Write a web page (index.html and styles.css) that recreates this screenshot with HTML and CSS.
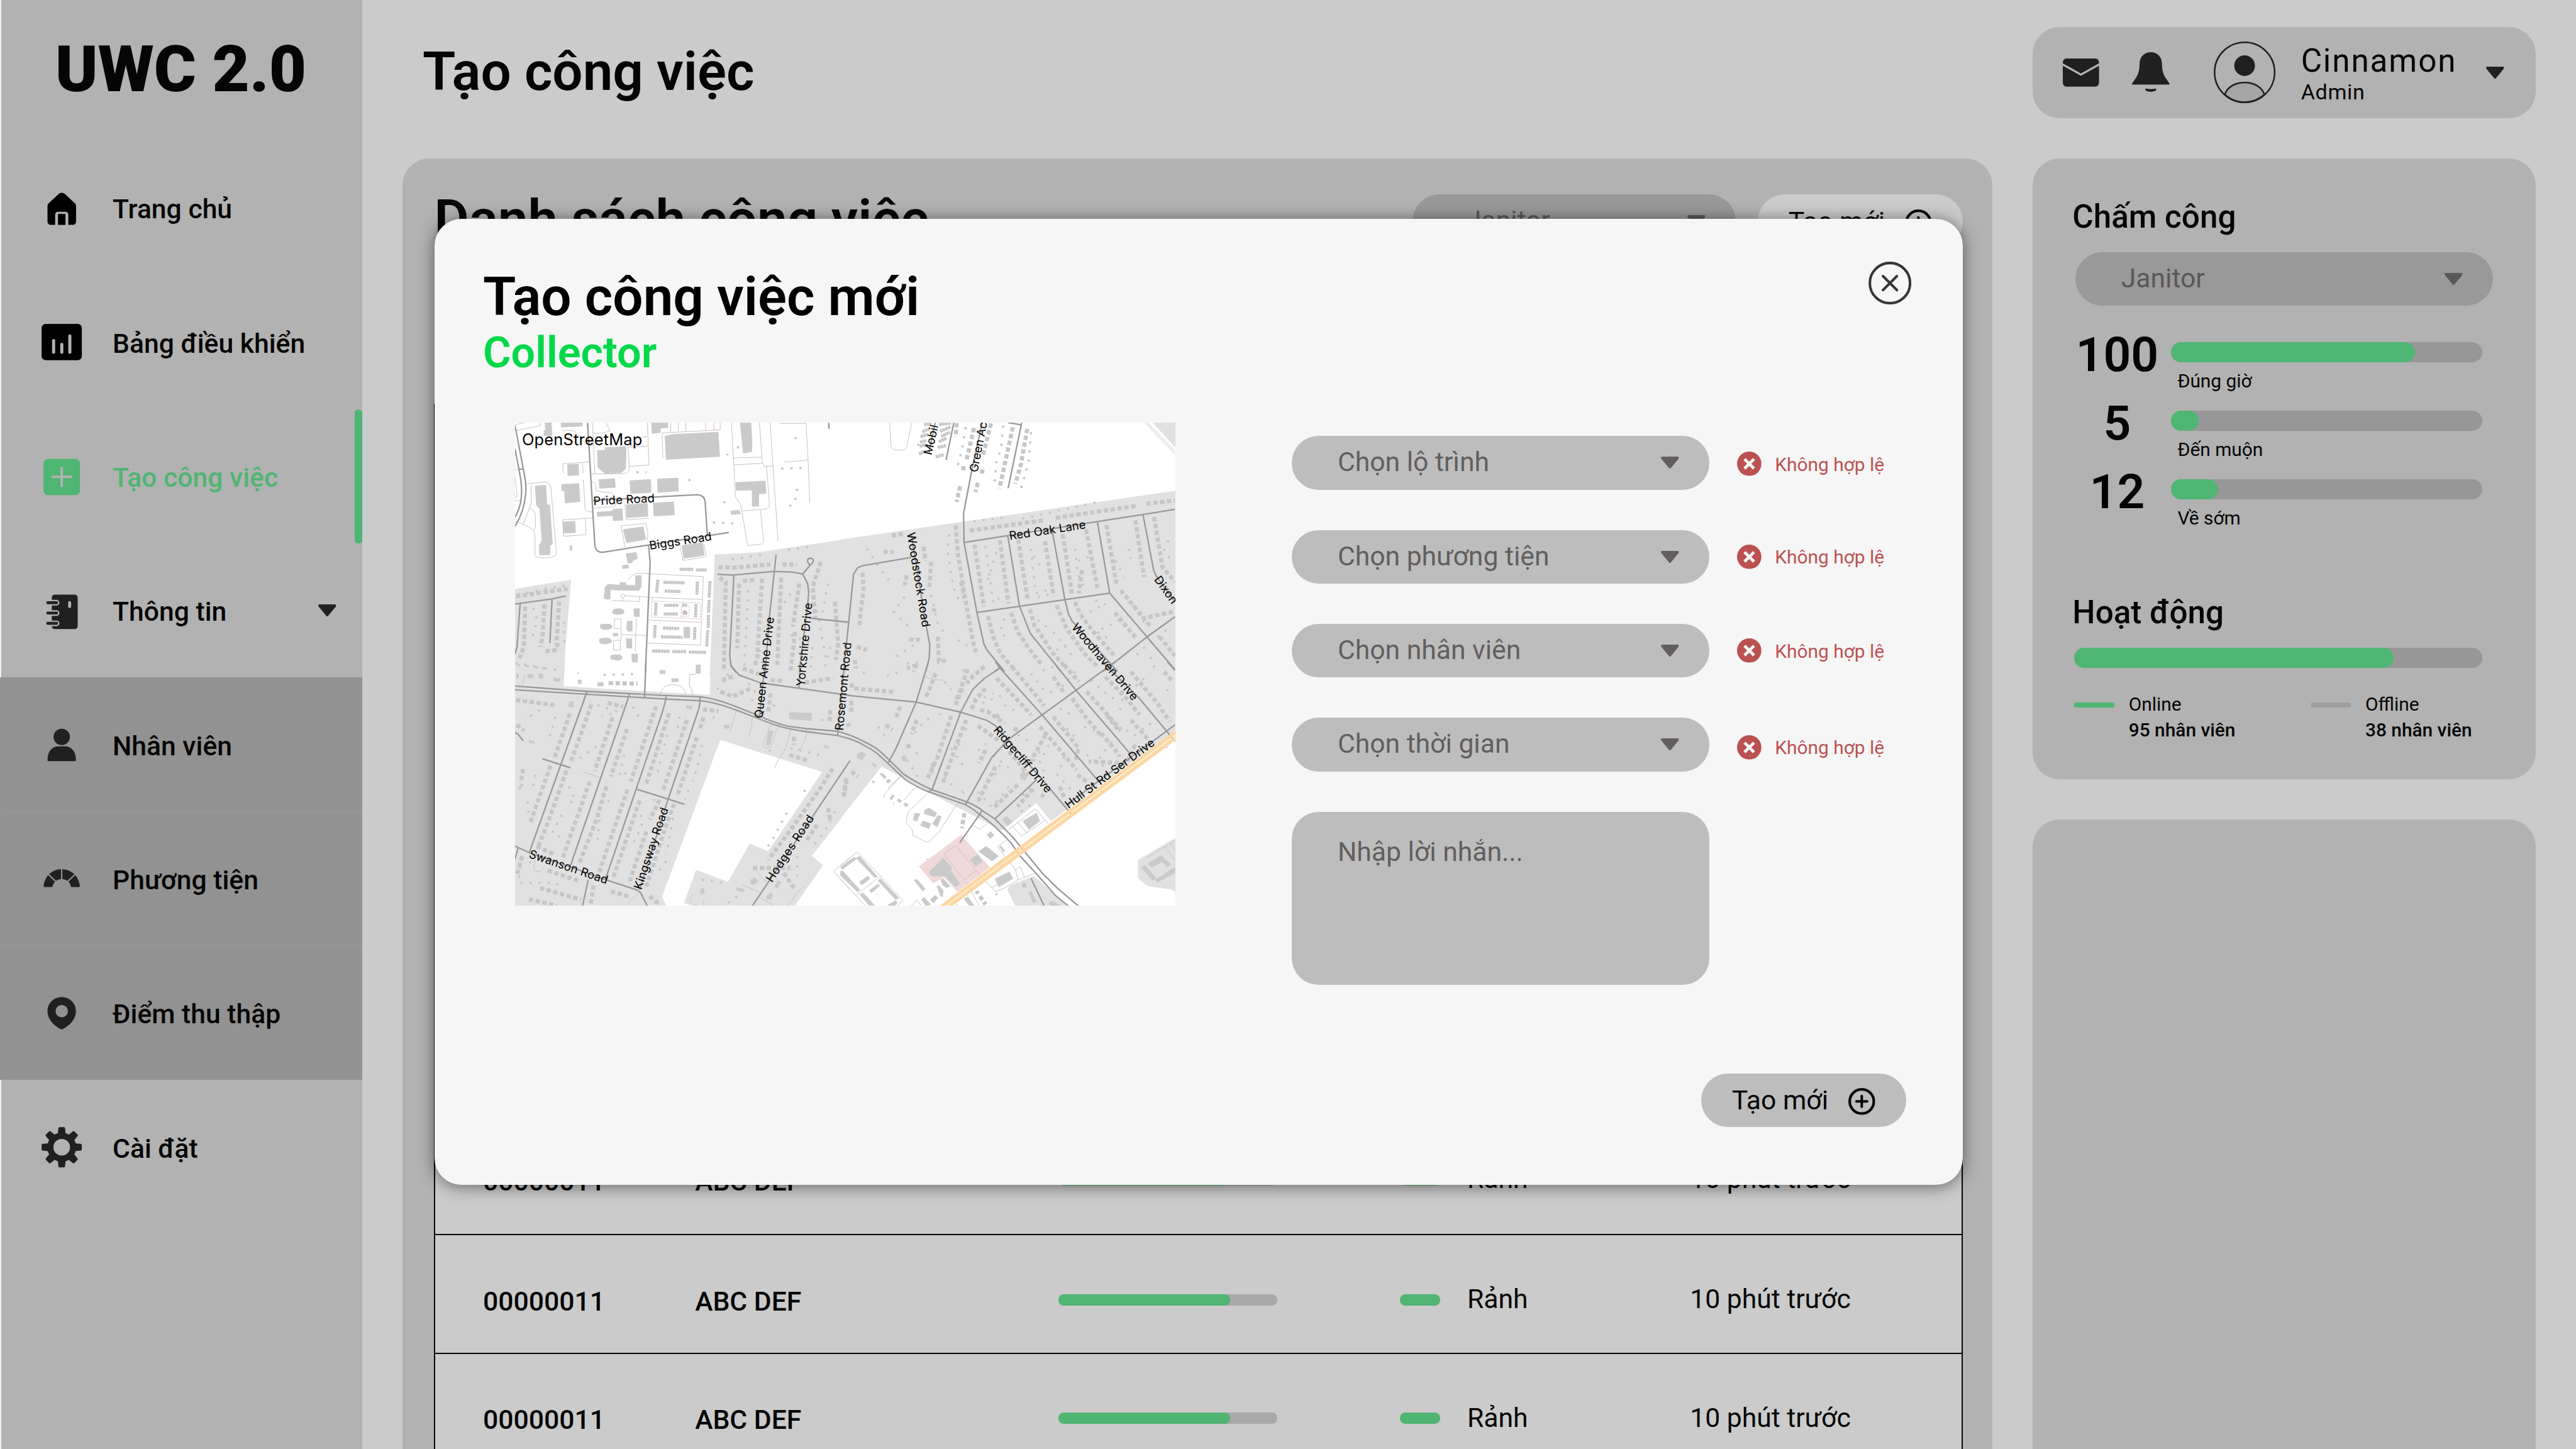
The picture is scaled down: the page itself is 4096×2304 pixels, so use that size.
FILE: index.html
```html
<!DOCTYPE html>
<html lang="vi">
<head>
<meta charset="utf-8">
<title>UWC 2.0 - Tạo công việc</title>
<link rel="stylesheet" href="styles.css">
</head>
<body>
<svg class="defs" aria-hidden="true">
  <symbol id="caret" viewBox="0 0 13.4 9"><path d="M1 0h11.4c.9 0 1.300.9.7 1.600L7.500 8.500c-.5.6-1.100.6-1.600 0L.3 1.600C-.3.9.1 0 1 0z"/></symbol>
  <symbol id="plus" viewBox="0 0 20 20"><g fill="none" stroke="currentColor"><circle cx="10" cy="10" r="9" stroke-width="2"/><path d="M10 6v8M6 10h8" stroke-width="1.900" stroke-linecap="round"/></g></symbol>
  <symbol id="invalid" viewBox="0 0 18 18"><circle cx="9" cy="9" r="9" fill="#bb5151"/><path d="M5.500 5.500l7 7M12.500 5.500l-7 7" stroke="#f6f6f6" stroke-width="2.200"/></symbol>
</svg>

<div class="page">
  <nav class="sidebar">
    <div class="logo">UWC 2.0</div>
    <a class="item"><svg class="icon" viewBox="0 0 32 32"><path d="M8 28.400c-1.500 0-2.600-1-2.600-2.500V14.500c0-1.200.5-2 1.400-2.700l6.900-6.400c1.500-1.300 3.200-1.300 4.700 0l6.900 6.400c.9.700 1.400 1.500 1.400 2.700v11.400c0 1.500-1.100 2.500-2.600 2.500h-3.200v-7.600c0-1.400-.8-2.200-2.200-2.200h-5.400c-1.400 0-2.200.8-2.200 2.200v7.600z"/><path d="M13.200 20.200h5.600v8.200h-5.600z"/></svg><span>Trang chủ</span></a>
    <a class="item"><svg class="icon" viewBox="0 0 32 32"><rect x="1" y="2.400" width="30" height="27" rx="3"/><g fill="#b2b2b2"><rect x="8.800" y="13.700" width="2.300" height="10.900" rx="1"/><rect x="14.900" y="16.500" width="2.300" height="8.100" rx="1"/><rect x="20.900" y="10.200" width="2.300" height="14.400" rx="1"/></g></svg><span>Bảng điều khiển</span></a>
    <a class="item active"><svg class="icon" viewBox="0 0 32 32"><rect x="2.400" y="2.600" width="27.200" height="27" rx="3.500"/><path d="M16 8.600v15M8.400 16.100h15.300" stroke="#b2b2b2" stroke-width="1.900"/></svg><span>Tạo công việc</span></a>
    <a class="item soft"><svg class="icon" viewBox="0 0 32 32"><path d="M11 4h14.500c1.500 0 2.400.9 2.400 2.400v20.900c0 1.500-.9 2.400-2.400 2.400H11c-1.500 0-2.400-.9-2.400-2.400V6.400C8.600 4.900 9.500 4 11 4z"/><rect x="20.800" y="8.800" width="2.200" height="5.200" rx="1" fill="#b2b2b2"/><g fill="none" stroke-linecap="round"><path d="M6 10h6.200M6 17.700h6.200M6 25.400h6.200" stroke="#b2b2b2" stroke-width="4.200"/><path d="M5.600 10h6.600M5.600 17.700h6.600M5.600 25.400h6.600" stroke="#202020" stroke-width="2.200"/></g></svg><span>Thông tin</span><svg class="caret"><use href="#caret"/></svg></a>
    <div class="submenu">
      <a class="item soft"><svg class="icon" viewBox="0 0 32 32"><circle cx="16" cy="10.200" r="6.100"/><path d="M5.400 27.400c0-6.500 3.400-10.200 8.200-10.200h4.800c4.800 0 8.200 3.700 8.200 10.200 0 .6-.4.9-1 .9H6.400c-.6 0-1-.3-1-.9z"/></svg><span>Nhân viên</span></a>
      <a class="item soft"><svg class="icon" viewBox="0 0 32 32"><path d="M15.500 8.400v7.400c-1.400.1-2.700.6-3.700 1.300L6.600 12.200c2.400-2.300 5.500-3.700 8.900-3.800zM16.500 8.400v7.400c1.400.1 2.700.6 3.700 1.300l5.200-4.900c-2.400-2.300-5.500-3.700-8.900-3.800zM5.900 12.900l5.100 4.900c-.9.900-1.500 2-1.800 3.300-.1.500-.4.700-.8.700H3.300c-.6 0-.9-.4-.8-1 .4-3 1.500-5.700 3.400-7.900zM26.100 12.900l-5.100 4.900c.9.900 1.500 2 1.800 3.300.1.500.4.700.8.700h5.100c.6 0 .9-.4.8-1-.4-3-1.500-5.700-3.400-7.900z"/></svg><span>Phương tiện</span></a>
      <a class="item soft"><svg class="icon" viewBox="0 0 32 32"><path fill-rule="evenodd" d="M16 4c6 0 10.600 4.400 10.600 10.500 0 5.600-4 10-9.500 13.200-.7.400-1.500.4-2.200 0C9.400 24.500 5.400 20.100 5.400 14.500 5.400 8.400 10 4 16 4zm0 5.800a4.600 4.600 0 1 0 0 9.200 4.600 4.600 0 0 0 0-9.200z"/></svg><span>Điểm thu thập</span></a>
    </div>
    <a class="item soft"><svg class="icon" viewBox="0 0 32 32"><g><circle cx="16" cy="16" r="10.800"/><path id="tooth" d="M12.900 8l.6-6.100c.1-.6.400-.9.900-.9h3.200c.5 0 .8.300.9.900l.6 6.100z"/><use href="#tooth" transform="rotate(45 16 16)"/><use href="#tooth" transform="rotate(90 16 16)"/><use href="#tooth" transform="rotate(135 16 16)"/><use href="#tooth" transform="rotate(180 16 16)"/><use href="#tooth" transform="rotate(225 16 16)"/><use href="#tooth" transform="rotate(270 16 16)"/><use href="#tooth" transform="rotate(315 16 16)"/></g><circle cx="16" cy="16" r="6.200" fill="#b2b2b2"/></svg><span>Cài đặt</span></a>
  </nav>

  <main class="main">
    <h1 class="title">Tạo công việc</h1>
    <section class="panel">
      <div class="panel-head">
        <h2>Danh sách công việc</h2>
        <div class="select narrow"><span>Janitor</span><svg class="caret"><use href="#caret"/></svg></div>
        <div class="button light"><span>Tạo mới</span><svg class="plus"><use href="#plus"/></svg></div>
      </div>
      <div class="table">
        <div class="row first"><b>00000011</b><b>ABC DEF</b><div class="bar"><i></i></div><div class="state"><i></i>Rảnh</div><div class="time">10 phút trước</div></div>
        <div class="row"><b>00000011</b><b>ABC DEF</b><div class="bar"><i></i></div><div class="state"><i></i>Rảnh</div><div class="time">10 phút trước</div></div>
        <div class="row"><b>00000011</b><b>ABC DEF</b><div class="bar"><i></i></div><div class="state"><i></i>Rảnh</div><div class="time">10 phút trước</div></div>
      </div>
    </section>
  </main>

  <aside class="aside">
    <div class="card user">
      <svg class="mail" viewBox="0 0 27 21"><path d="M3 0h21c1.800 0 3 1.200 3 3.200v14.600c0 2-1.200 3.200-3 3.200H3c-1.800 0-3-1.200-3-3.200V3.200C0 1.200 1.200 0 3 0z"/><path d="M-.5 4.200L13.500 12l14-7.800" fill="none" stroke="#b2b2b2" stroke-width="1.500"/></svg>
      <svg class="bell" viewBox="0 0 28 30"><path d="M14 0c4.800 0 8 3.200 8.300 8 .2 5.300.6 7.500 2.500 10.700l2.900 4.300c.5.700.2 1.200-.6 1.200H.9c-.8 0-1.100-.5-.6-1.200l2.900-4.300C5.100 15.500 5.500 13.300 5.700 8 6 3.200 9.200 0 14 0zM11 27.200c.9.400 5.100.4 6 0 .8-.3 1.500.4.9 1.100-1 1.700-6.800 1.700-7.800 0-.6-.7.100-1.400.9-1.100z"/></svg>
      <svg class="avatar" viewBox="0 0 46 46"><circle cx="23" cy="23" r="22.400" fill="none" stroke="#202020" stroke-width="1.200"/><path d="M8.200 39.500C10.300 33.800 16 30.600 23 30.600s12.700 3.200 14.800 8.900A22 22 0 0 1 8.200 39.500z" fill="#a5a5a5" stroke="#202020" stroke-width="1.200"/><circle cx="23" cy="18" r="7.700" fill="#202020"/></svg>
      <div class="who"><div class="name">Cinnamon</div><div class="role">Admin</div></div>
      <svg class="caret"><use href="#caret"/></svg>
    </div>
    <div class="card stats">
      <h3>Chấm công</h3>
      <div class="select wide"><span>Janitor</span><svg class="caret"><use href="#caret"/></svg></div>
      <div class="stat"><strong>100</strong><div><div class="meter"><i style="width:78.500%"></i></div><p>Đúng giờ</p></div></div>
      <div class="stat"><strong>5</strong><div><div class="meter"><i style="width:9%"></i></div><p>Đến muộn</p></div></div>
      <div class="stat"><strong>12</strong><div><div class="meter"><i style="width:15.300%"></i></div><p>Về sớm</p></div></div>
      <h3 class="activity">Hoạt động</h3>
      <div class="meter"><i style="width:78.300%"></i></div>
      <div class="legend">
        <div class="key"><i></i><div>Online<b>95 nhân viên</b></div></div>
        <div class="key off"><i></i><div>Offline<b>38 nhân viên</b></div></div>
      </div>
    </div>
    <div class="card blank"></div>
  </aside>
</div>

<div class="modal">
  <div class="modal-head">
    <div><h2>Tạo công việc mới</h2><div class="kind">Collector</div></div>
    <svg class="close" viewBox="0 0 32 32" fill="none" stroke="#363637" stroke-width="1.900"><circle cx="16" cy="16" r="15"/><path d="M10.800 10.800l10.400 10.400M21.200 10.800L10.800 21.200" stroke-linecap="round"/></svg>
  </div>
  <div class="modal-body">
    <svg class="map" viewBox="1066.700 875 1366.700 1000" preserveAspectRatio="none">
      <rect x="1060" y="870" width="1380" height="1010" fill="#fff"/>
      <!-- residential land -->
      <g fill="#e1e1e1">
        <g transform="matrix(.4592 0 0 .3444 1040 850)"><path d="M958 866L1145 853L1528 778V1600H936ZM50 1073L311 1017L275 1600H50Z"/></g>
        <g transform="matrix(.4592 0 0 .3444 1740 850)"><path d="M-4 777L1520 480V1580H-4ZM1408 73H1520V235Z"/></g>
        <g transform="matrix(.4592 0 0 .3444 1040 1370)"><path fill-rule="evenodd" d="M50 -5H284L277 147L936 200L941 -5H1530V940L1396 1168L1447 1223L1318 1470H860L820 1450L874 1251L1018 1324L1116 1094L1200 1138L1443 662L983 470L721 1412L740 1470H50Z"/></g>
        <g transform="matrix(.4592 0 0 .3444 1740 1370)"><path d="M-2 -5H1520V405L950 958L883 850L730 1016L458 826L187 630L-2 948ZM764 1345L872 1288L1025 1470H790L754 1373ZM1342 1192L1520 1052V1400L1497 1371L1386 1349L1342 1302Z"/><path fill="#f0d9da" d="M545 1041L675 1237L528 1383L468 1296L419 1332L354 1231Z"/></g>
      </g>
      <!-- buildings -->
      <g fill="#cacaca">
        <g transform="matrix(.4592 0 0 .3444 1040 850)"><path d="M192 73h31l3 80h-38v-35h6zM264 73h99v22l-98 6zM672 73h76v31l-33 4v25l-40 7zM733 152L772 142L975 128L982 278L738 296ZM428 240L463 236V222L560 214V262L558 350L536 376L464 380L445 360L430 340ZM293 323L344 320L347 389L295 393ZM267 442L347 437L352 549L283 557L280 485L267 484ZM148 452L198 448L203 566H216L228 805L217 812V868L168 870L166 812L178 780L168 590L153 572ZM435 414L508 408L512 463L438 470ZM575 420L670 412L673 494L578 501ZM698 409L794 404L796 486L701 493ZM558 565L656 556L658 638L561 645ZM680 555L774 547L778 628L683 636ZM427 609L496 604L498 592L541 588L546 661L499 664V633L428 638ZM272 668L329 663L332 735L276 738ZM544 714L637 697L649 775L560 797ZM809 810L904 792L912 872L818 890ZM557 859L606 851L611 890L588 905V916L566 919ZM540 930L568 925L572 948L542 953ZM1072 73H1123L1128 210L1126 248L1086 258ZM1052 431L1187 422L1191 500L1158 503V576L1126 577V480L1054 481ZM1030 602L1070 598L1076 622L1032 626ZM600 992L628 990V1060L617 1084L540 1082L488 1078V1130L478 1138L458 1130L462 1062L478 1042L530 1048V1032H557L560 1048L600 1050ZM498 1196L515 1190H535L550 1200V1220L530 1228H510L497 1218ZM592 1190H620V1240H594ZM442 1285L460 1282H482L496 1290V1308L480 1317H456L442 1308ZM563 1264H588V1326L568 1331L560 1315ZM438 1372L455 1367H482L493 1378V1395L470 1404H450L438 1394ZM558 1370H586V1430H560ZM488 1472L505 1467H530L542 1477V1495L522 1504L488 1495ZM583 1462H612V1514H585ZM818 1300H847V1368H818ZM304 812H315V843H305ZM499 1337H523V1357H500Z"/><path fill="#c9babb" d="M813 1207L823 1198L836 1212L833 1228H813Z"/></g>
        <g transform="matrix(.4592 0 0 .3444 1040 1370)"><path d="M873 18H895V70L872 72ZM709 50H736V73H710ZM763 101H795V122H764ZM1295 304L1396 308V356L1294 344ZM1202 412L1224 418L1207 505L1188 500ZM997 380L1025 378V398L1005 405ZM341 108H358V135H342ZM230 95L263 100L262 122L232 118ZM114 75L142 74V100H116ZM163 70L184 72L186 102L165 100ZM429 125L457 122V148H431ZM1119 1310L1140 1295L1155 1320L1135 1343L1118 1335ZM1190 1410L1212 1386L1222 1400L1214 1430L1190 1428ZM1058 1355L1092 1370L1088 1386L1056 1372ZM1228 1350L1243 1315L1259 1325L1240 1366ZM121 470L148 480L146 492L120 488ZM70 762L87 730L97 737L80 774ZM304 240L322 236V280L298 268ZM827 262H857V290L830 280ZM892 1370L908 1358L914 1390L896 1400ZM1452 500L1475 508L1470 525L1448 515Z"/></g>
        <g transform="matrix(.4592 0 0 .3444 1740 1370)"><path d="M335 910L361 912L345 962L328 950ZM380 890L400 878L437 910L425 935L378 915ZM372 955L409 972L400 1005L360 985ZM440 922L457 930L438 995L414 975ZM730 950L748 928L778 960L755 988ZM822 958L885 908L901 957L851 1010ZM585 1188L620 1160L641 1202L610 1231ZM622 1140L658 1107L715 1170L684 1200ZM400 1265L463 1178L503 1238L498 1255L540 1335L518 1356L470 1290L410 1290ZM697 1305L762 1262L780 1305L714 1356ZM660 1040L678 1020L695 1043L676 1064ZM452 1310L465 1303L497 1350L480 1360L462 1345ZM716 1110L726 1107L745 1140L735 1145ZM557 1425L575 1412L606 1466H580ZM365 1430L378 1415L410 1460L395 1466H385ZM405 1430L428 1402L442 1420L420 1452ZM434 1347L446 1345L465 1375L462 1415L452 1410ZM332 1315L345 1305L384 1365L372 1380ZM1385 1215L1446 1163L1492 1220L1475 1235L1452 1205L1405 1237ZM1355 1235L1375 1222L1425 1302L1408 1315ZM1420 1310L1509 1235V1272L1430 1327ZM0 1235L62 1172L75 1185L10 1250ZM70 1180L88 1168L168 1290L155 1300ZM0 1260L10 1255L90 1372L78 1387L0 1285ZM85 1325L125 1287L135 1305L97 1343ZM130 1375L170 1335L180 1345L140 1392ZM168 1315L182 1303L265 1420L250 1432ZM87 1400L103 1388L157 1466H130ZM215 1460L250 1435L258 1450L245 1466H218ZM75 560L95 538L116 555L98 593L76 580ZM140 612L152 608L166 628L158 637ZM176 672L190 670L208 690L200 706ZM205 718L218 704L230 718L215 733ZM221 822L236 798L246 806L232 832ZM254 835L262 822L278 835L270 850ZM283 858L295 846L308 860L298 876ZM276 572L288 558L300 575L295 602L279 596ZM808 680L825 655L844 685L835 715L815 705ZM847 1385L862 1380L885 1445L870 1452ZM605 1388L618 1375L630 1387L616 1400ZM938 1450L955 1437L995 1466H950Z"/></g>
      </g>
      <!-- rows of houses, one dash per house -->
      <g class="homes">
        <g transform="matrix(.4592 0 0 .3444 1040 850)"><path d="M62 1117L295 1072M104 1180L98 1420L78 1490M190 1165L182 1360L172 1420M257 1147L245 1400L253 1420M195 1448L250 1440M975 942L1045 944L1210 925M1263 925H1330M980 1005L1008 1030L1000 1568M1068 1040L1060 1430M1085 1023L1140 1018M1172 1010L1150 1480M1258 1005L1240 1530M1340 1040L1310 1300M1436 910L1400 1060L1412 1250M1500 1150L1515 1400L1505 1500M1140 1530L1160 1440M1320 1330L1300 1568"/></g>
        <g transform="matrix(.4592 0 0 .3444 1740 850)"><path d="M520 690L530 860L570 1180L600 1400L615 1470M605 805L648 1180M666 1235L692 1370L722 1460L780 1550M720 780L758 1160M770 1215L800 1330L850 1430L910 1530M802 775L845 1135M855 1195L875 1290L960 1460L1020 1550M923 785L962 1115M975 1170L1020 1310L1100 1460L1160 1540M1003 745L1045 1105M1058 1150L1080 1220L1135 1320L1240 1480M1108 715L1160 1070M1200 688L1245 1040M1265 1080L1400 1300M1238 1215L1335 1370M1330 660L1370 1000M1415 640L1452 940L1509 1030M1440 1360L1509 1475M585 722L915 660M972 645L1340 572M1380 560L1509 540M232 752L290 740M195 850H240M100 975L105 1070L92 1215L85 1310M375 820L385 905M410 910L402 1060M545 1030L560 1130M300 990L290 1050M425 1190L420 1210M310 1375L360 1378M75 1420L120 1440M66 1500L70 1550M440 1360L445 1510L485 1500M345 1530L300 1548M603 105L568 305M680 78L642 275M778 100L718 468M843 110L815 320L790 440M545 345L575 350M630 365L650 368M620 435L610 490M540 455L525 550M525 75L520 160M1500 1210L1360 1250M650 1540L640 1550M1090 960L1075 1100"/></g>
        <g transform="matrix(.4592 0 0 .3444 1040 1370)"><path d="M62 230L240 262M305 312L235 580M218 625L128 962M402 258L308 608M290 655L205 970L160 1120M497 335L418 655M395 720L270 1190M563 405L490 690M470 750L425 950L345 1220M694 268L580 720M565 768L500 1020L435 1275M752 310L648 740M620 835L500 1300M833 350L725 775M710 830L665 950M650 1020L575 1320M908 335L892 402M878 455L790 805M775 855L735 1000L650 1350M905 287L975 297M1490 642L1440 750L1290 1030L1200 1190M170 1360L355 1430M120 1428L245 1466M412 1345L398 1466M95 645L85 720M90 1170L65 1290M480 128L610 132M1085 40L1160 75M985 180L1040 210L1120 160M1210 110L1270 115M1365 125L1490 100M1480 290L1475 370M65 380L100 415M65 85H75M205 1255L350 1320M490 1380L580 1415M665 1410L710 1460M1315 450V500M1295 560L1380 595M1550 700L1540 820M1470 880L1480 960M1420 980L1370 1080M1270 1270L1320 1370M1130 1240L1300 1240M155 1110L240 1160M475 248L545 270M1040 90L990 110M1210 190L1200 300"/></g>
        <g transform="matrix(.4592 0 0 .3444 1740 1370)"><path d="M50 130L55 160L240 182M345 15L330 60M430 70L410 140L385 220M575 45L520 245M650 30L600 85L570 130M550 160L520 260M655 160L610 230L590 290M630 290L665 300L740 370M705 100L830 275L860 320M775 30L920 265M1010 20L1075 120M960 90L1010 190M1045 220L1110 340L1180 450M1110 180L1180 280L1265 410M1195 90L1290 220L1350 320M1310 60L1430 250L1485 360M1460 60L1500 120M500 325L485 390L440 570L390 710M568 350L530 480L485 640L460 740M655 530L625 610M700 630L625 830L610 830M620 385L720 480M760 540L850 680M900 390L990 530L1065 650M960 330L1075 520L1060 600M925 440L850 620L820 600M1200 320L1260 420M1175 430L1240 530L1260 570M1330 500L1290 610L1120 600M800 410L770 400M50 235V300M35 370L40 390M270 270L250 340M205 380L235 410M345 350L320 435M305 495L310 520M420 610L410 670M50 660L80 690M30 710L15 810M800 740L690 880M870 765L800 870M905 800L920 810M555 780L550 785M560 910L548 1000M630 1410L655 1460M990 750L1010 820M1110 720L1070 680M1310 350L1390 470M700 320L720 340M830 1330V1360"/></g>
      </g>
      <g class="homes units">
        <g transform="matrix(.4592 0 0 .3444 1040 850)"><path d="M800 954H862M874 958H921M727 1032L823 1036M733 1085L804 1088M731 1171H796M728 1223H793M725 1308L798 1310M716 1360L812 1363M677 1445L756 1448M767 1449H831M842 1452L920 1454M702 1017L696 1094M880 1028L878 1106M694 1154L691 1232M874 1164L872 1243M690 1290L687 1368M869 1302L867 1377M937 1026L933 1124M933 1138L930 1216M930 1228L929 1308M927 1320L922 1418M812 1170H834"/></g>
        <g transform="matrix(.4592 0 0 .3444 1740 850)"><path d="M378 85L412 78M445 84L500 76M370 128L405 108M450 125L498 98M362 158L395 142M455 155L495 130M360 190L388 180M445 188L480 165M358 215L385 205M440 222L478 210M355 262L380 245M430 278L468 265"/></g>
      </g>
      <g class="homes sheds">
        <g transform="matrix(.4592 0 0 .3444 1040 850)"><path d="M140 1185L155 1230L150 1300L130 1390M70 1105L290 1050M280 1270V1420M70 1530L260 1560M1035 895L1180 865M1110 1080L1090 1568M1200 1290L1170 1520M1300 1100L1250 1200M1300 1350L1400 1400L1390 1560M1420 1200L1460 1500M1470 1040L1430 1300M605 371H650M535 408V410M840 418H850M1000 545L1015 586M950 673L1075 680M1062 215L1065 265M1325 160L1310 190M1350 345L1240 350M1330 470L1320 550L1290 580M1015 260V270M1380 820L1270 840M1480 1420L1450 1568"/></g>
        <g transform="matrix(.4592 0 0 .3444 1740 850)"><path d="M655 815L690 1160L740 1100M705 850L665 1020M860 830L880 1100L930 1080M900 930L860 850M1060 830L1070 980L1100 1060M1120 880L1060 910M1300 830L1310 890M1240 900L1280 1000M1480 780L1460 840L1490 900M735 90L725 230L705 300L695 450M565 100L550 230L530 330M860 130L850 300L830 400L815 470M490 745L485 855L510 1060L540 1160M350 200L380 280M600 665L750 642M820 650L1160 550M120 830L200 990L240 1050M290 1120L240 1210L310 1300M410 1110L440 1280L470 1340M530 1380L580 1420M330 1410L240 1490M740 1250L720 1330L760 1380M890 1260L930 1300M960 1330L1060 1500M1020 1410L960 1450M1170 1180L1110 1220M1160 1330L1230 1390M1260 1260L1140 1340M1320 1170L1380 1290M1470 1320L1390 1400L1320 1490M1400 1480L1420 1560M1150 1140L1200 1170M890 1120L960 1100"/></g>
        <g transform="matrix(.4592 0 0 .3444 1040 1370)"><path d="M240 330L215 450L240 430M170 290L100 350M430 260L520 300L450 330M350 580L425 510M300 750L330 830L290 860M590 270L620 340M550 560L530 690L570 660M745 440L720 560L700 680M800 330L790 400L830 410M950 330L960 350M900 500L890 580L860 720M840 770L825 830M450 790L500 870M270 920L225 1030L270 1060M150 680L140 750M115 840L120 920M440 950L430 1070M625 920L630 990L590 1090M690 830L650 840M770 940L740 1160M740 1200L700 1270M80 1230L75 1330L240 1330L270 1360M130 1200L110 1230M1000 20L1020 90L960 180M1110 130L1140 180L1120 260M1230 260L1190 290M1440 355L1475 320M1300 520L1430 560M1365 770L1360 800M1284 908L1250 990L1230 1043L1205 1098L1180 1140M1500 900L1450 1030L1400 1110M1330 1170L1330 1290M1060 1410L1010 1460M900 1310L1000 1330M1210 530L1200 540M20 0L200 45M100 15L220 45M590 75L430 80M340 68H345"/></g>
        <g transform="matrix(.4592 0 0 .3444 1740 1370)"><path d="M70 30L110 70M210 85L260 65M300 10L350 5M470 120L500 170M560 50L540 60M610 240L690 190M640 250L730 200M740 260L810 310M860 70L910 160L970 190M960 30L900 60M1000 150L1060 60M990 280L1040 320M1130 110L1170 160L1240 230M1280 170L1260 300M1370 100L1330 150M1480 170L1440 180M400 340L350 400L330 440M450 310L460 360M570 400L530 470L540 540M660 490L600 560M500 520L560 640M340 550L380 560M300 590L350 690M690 560L760 640M800 440L850 480M900 540L860 620M940 500L900 600L930 700M1010 570L980 680L1040 770M1020 400L1080 480M1100 390L1150 420M1110 560L1200 640M1220 480L1160 600M1290 410L1340 450M1400 370L1340 430M720 620L690 700M760 750L700 850M860 760L800 830M815 900L870 850M470 690L520 770M170 390L220 480M145 718L160 735M238 852H242M392 1185V1190M700 1397H708M1470 513V518M165 1397V1400M620 780L680 870"/></g>
      </g>
      <!-- parcel lines -->
      <g class="parcels">
        <g transform="matrix(.4592 0 0 .3444 1040 850)"><path d="M58 122L173 91V73M58 85L100 73M407 73L418 380M468 73L487 122L460 134L410 137M655 73L662 328L572 335M275 375L273 320L393 309M361 315L366 375M403 381L545 380Q575 375 574 350L567 220L658 213M725 285L721 135L983 116V73M760 73V130M793 73L795 128M827 73L829 124M917 73L918 120M955 73V118M272 122Q325 112 330 130T350 155M268 167L360 160M590 170L658 155M110 440L195 429Q215 430 220 470L245 860Q240 885 200 885Q150 890 148 870V745L142 722Q110 685 58 667M130 445L131 560L95 682M126 587Q150 605 150 630V700L142 722M366 415L374 590Q380 612 408 609M404 430Q418 428 420 445L424 480Q440 490 490 494Q502 500 502 520L515 560Q515 577 480 578L415 588M272 657L408 646M272 657L278 756L378 746L375 652M553 560L559 656L660 648M555 828L536 693L648 678L657 730L655 780M800 800L815 901L915 880Q922 875 918 860L908 800M565 1018Q590 975 620 978L907 998L903 1136L663 1123M663 1260L897 1273M903 1136L894 1410L655 1398M552 1113L660 1121M543 1125V1142M495 1142L619 1148V1115M508 1252H536V1310H505ZM503 1381H533V1440H502ZM536 1310V1380M536 1347L648 1352M605 1248L600 1450M1034 73L1052 520L1075 565L1107 812L1165 803Q1180 800 1178 780L1165 600M1086 603L1190 592Q1205 590 1205 560L1192 335M1043 285L1170 280M1044 326L1173 318M1160 73L1173 310L1183 338L1220 332M1208 73L1244 785M1270 310L1368 300L1379 290L1370 73M1379 290L1387 555M1250 78L1370 78M58 355H80M58 400L66 490Q70 530 58 520M58 541H80"/><ellipse cx="543" cy="1113" rx="9" ry="12"/><path class="dashed" d="M675 1128L671 1240L893 1253L895 1157L675 1145M810 1155L806 1245M812 1175L844 1177L841 1237H808"/></g>
        <g transform="matrix(.4592 0 0 .3444 1740 850)"><path d="M223 73L228 210Q232 236 250 236L285 238Q298 232 302 205L323 73M1376 73L1509 262M1385 73L1509 245"/></g>
        <g transform="matrix(.4592 0 0 .3444 1040 1370)"><path d="M101 80L92 142M713 195Q718 140 772 137Q828 142 827 200M873 76H846L844 140Q857 165 860 205M367 664L445 698M1055 295L1027 422M1127 335Q1127 400 1111 448M1218 355L1175 500Q1180 518 1200 518L1212 510L1235 420L1255 370M1302 410L1277 522L1245 590L1227 642M1373 403V430Q1355 525 1327 537M148 1195L142 1240Q148 1262 165 1262Q182 1260 186 1235M620 1388L575 1440L560 1466M868 1392Q845 1400 848 1440Q855 1460 880 1466M908 1435L910 1466M1080 1338L1163 1390M1145 1250L1170 1300L1195 1322M1158 1415L1228 1466M1283 1466L1305 1440L1330 1385L1363 1350M1568 1180L1494 1260L1568 1370"/></g>
        <g transform="matrix(.4592 0 0 .3444 1740 1370)"><path d="M380 90L420 107L468 112M270 690L215 760M272 690L197 800V818M338 757L287 832M400 785L315 890Q298 920 298 970L325 1010L326 1042L385 1083Q395 1088 405 1078L447 1020L538 832M600 987L630 1007L665 968M758 1010L880 884L938 975M776 990L818 1048L924 953M800 966L842 1032M750 1072L709 1112L790 1250L802 1312L875 1273M785 1256L812 1232L831 1297M610 1260L558 1310L466 1158L520 1104L640 1300L700 1382L735 1365L802 1312M683 1358L710 1338M0 1225L76 1144L181 1288L283 1438L257 1466M181 1288L72 1405M0 1305L112 1466M320 1466L345 1435L365 1466M573 1330L625 1466M500 1436L530 1466M1380 1180L1509 1076M1463 1112L1509 1195M1490 1092L1509 1130"/></g>
      </g>
      <!-- streets -->
      <g class="roads">
        <g transform="matrix(.4592 0 0 .3444 1040 850)"><path d="M58 90L95 350Q112 450 105 510Q98 610 58 695M58 230L78 370Q95 480 82 560Q72 610 58 640M78 352H95M385 73L418 815Q424 855 455 852L660 808L1022 733M410 540L880 506Q910 508 915 545L925 750M660 808L667 910L646 1568M58 1163L225 1133L287 1115M225 1133L215 1398M81 1160L67 1420L58 1465M970 984L1040 989L1227 967L1310 971L1355 983L1388 930M1355 983L1377 1040L1382 1090L1378 1160L1340 1568M1235 867L1205 1240L1186 1568M1045 989L1026 1470L1031 1535L1055 1575M1385 1248L1562 1273M1472 73L1474 110"/><path d="M1388 930Q1372 905 1378 895Q1390 880 1402 895Q1408 910 1388 930"/></g>
        <g transform="matrix(.4592 0 0 .3444 1740 850)"><path d="M320 883L105 931L78 945L60 983L38 1273L15 1568M320 740L345 950L388 1300L404 1410L401 1490L385 1568M640 73L590 380L556 618L558 793L616 1214L648 1405L663 1442L740 1568M558 793L755 752L1365 625L1509 594M755 752L808 1176L857 1340L995 1568M955 720L1013 1137L1028 1220L1045 1265L1250 1568M1159 668L1215 1098L1509 1558M616 1214L1215 1098M1365 625L1413 960L1425 995L1509 1150M1509 1240L1383 1361L1185 1568M720 1547L697 1568M512 73L477 297M428 73L400 250M757 73L816 85M818 73L757 467"/></g>
        <g transform="matrix(.4592 0 0 .3444 1040 1370)"><path d="M58 146L380 178L735 203L890 211Q960 220 1055 270L1145 318Q1230 370 1290 388L1370 402L1510 418L1524 423M58 169L740 225L890 234Q950 238 1060 293L1200 365Q1260 400 1375 421L1510 443L1524 448M648 0L642 215M383 178L122 1148M574 197L307 1230M740 205Q735 260 700 390L465 1310M892 211Q892 260 885 290L740 860L620 1370M181 583L308 638M608 767L822 857M58 1108L122 1148L300 1230L465 1310L608 1372L624 1388L655 1470M72 1120L58 1185M388 1310L362 1470M58 427L70 433L95 476M1030 0L1032 25L1068 80L1165 127L1568 203M1186 0L1160 330M1345 0L1338 157M1545 0L1512 443M1568 595L1395 940L1127 1470"/></g>
        <g transform="matrix(.4592 0 0 .3444 1740 1370)"><path d="M0 423Q60 445 103 478Q150 505 185 545L285 675Q340 725 410 768L570 842Q620 870 640 895L697 945L778 1055L910 1270L980 1363L1075 1470M0 448Q70 470 110 505Q150 530 180 568L290 705Q350 760 405 785L563 858Q600 885 630 920Q700 985 770 1090L812 1170L888 1280L970 1405L1030 1470M30 202L342 243L543 303L660 352L700 385L940 755L1042 917M398 0L342 243L250 525L215 610M720 38L650 100L597 167L543 303L415 765L400 783M700 0L720 38L910 320L1165 720M1240 0L1063 172L910 320L760 465L682 578L565 858M960 0L1063 172L1305 550M1180 0L1345 215L1509 478M1475 0L1509 52M885 710L697 945M640 895L538 1090M1509 380L1020 860M860 1303L920 1470"/></g>
        <g transform="matrix(.4592 0 0 .3444 1740 1370)"><path class="highway" d="M1520 417L450 1478M1520 450L482 1478"/></g>
      </g>
      <g class="labels">
        <text class="credit" x="1081" y="922" textLength="249">OpenStreetMap</text>
        <text transform="translate(1229 1046) rotate(-2.900)" textLength="127">Pride Road</text>
        <text transform="translate(1346 1138) rotate(-8.700)" textLength="130">Biggs Road</text>
        <text transform="translate(1579 1488) rotate(-83.500)" textLength="211">Queen Anne Drive</text>
        <text transform="translate(1666 1422) rotate(-84.700)" textLength="174">Yorkshire Drive</text>
        <text transform="translate(1746 1513) rotate(-84.700)" textLength="183">Rosemont Road</text>
        <text transform="translate(1878 1104) rotate(80.700)" textLength="198">Woodstock Road</text>
        <text transform="translate(2091 1118) rotate(-8.700)" textLength="160">Red Oak Lane</text>
        <text transform="translate(1929 943) rotate(-77)" textLength="63">Mobil</text>
        <text transform="translate(2024 979) rotate(-79)">Green Ac</text>
        <text transform="translate(2218 1299) rotate(50.100)" textLength="199">Woodhaven Drive</text>
        <text transform="translate(2389 1200) rotate(54)">Dixon</text>
        <text transform="translate(2056 1512) rotate(49.700)" textLength="172">Ridgecliff Drive</text>
        <text transform="translate(2213 1675) rotate(-36.700)" textLength="224">Hull St Rd Ser Drive</text>
        <text transform="translate(1094 1775) rotate(18.900)" textLength="171">Swanson Road</text>
        <text transform="translate(1328 1843) rotate(-71.500)" textLength="177">Kingsway Road</text>
        <text transform="translate(1599 1828) rotate(-56.900)" textLength="160">Hodges Road</text>
      </g>
    </svg>
    <div class="form">
      <div class="field"><div class="select pale"><span>Chọn lộ trình</span><svg class="caret"><use href="#caret"/></svg></div><svg class="bad"><use href="#invalid"/></svg><em>Không hợp lệ</em></div>
      <div class="field mid"><div class="select pale"><span>Chọn phương tiện</span><svg class="caret"><use href="#caret"/></svg></div><svg class="bad"><use href="#invalid"/></svg><em>Không hợp lệ</em></div>
      <div class="field mid"><div class="select pale"><span>Chọn nhân viên</span><svg class="caret"><use href="#caret"/></svg></div><svg class="bad"><use href="#invalid"/></svg><em>Không hợp lệ</em></div>
      <div class="field last"><div class="select pale"><span>Chọn thời gian</span><svg class="caret"><use href="#caret"/></svg></div><svg class="bad"><use href="#invalid"/></svg><em>Không hợp lệ</em></div>
      <div class="message">Nhập lời nhắn...</div>
    </div>
  </div>
  <div class="modal-foot"><div class="button"><span>Tạo mới</span><svg class="plus"><use href="#plus"/></svg></div></div>
</div>
</body>
</html>
```
FILE: styles.css
```css
/* 1rem is ten units of the 1920-wide layout */
html { font-size: calc(100vw / 192); }
* { box-sizing: border-box; margin: 0; padding: 0; }
body {
  position: relative;
  width: 192rem;
  height: 108rem;
  overflow: hidden;
  background: #cbcbcb;
  color: #050505;
  font-family: Roboto, "Liberation Sans", sans-serif;
  font-size: 2rem;
  line-height: 1.172;
}
svg { display: block; flex: none; }
h1, h2 { font-weight: 600; }
h3 { font-weight: 500; }
.defs { position: absolute; width: 0; height: 0; }
.caret { width: 1.34rem; height: .9rem; }
.plus { width: 2rem; height: 2rem; position: relative; top: .1rem; }

.page { display: grid; grid-template-columns: 27rem 121.5rem 37.5rem; height: 108rem; }

/* sidebar */
.sidebar { background: #b2b2b2; border-left: .1rem solid #f0f0f0; height: 108rem; }
.logo { height: 10.5rem; padding: 2.35rem 0 0 4.02rem; font-size: 4.8rem; font-weight: 900; white-space: nowrap; }
.item { display: flex; align-items: center; height: 10rem; padding-left: 2.9rem; font-weight: 500; }
.item .icon { width: 3.2rem; height: 3.2rem; margin-right: 2.2rem; position: relative; top: .03rem; }
.item span { position: relative; top: .08rem; white-space: nowrap; }
.item.soft .icon, .item.soft .caret { fill: #202020; }
.item .caret { margin-left: auto; margin-right: 1.92rem; }
.item.active { position: relative; color: #4fb572; fill: #4fb572; }
.item.active::after { content: ""; position: absolute; right: 0; top: 0; width: .55rem; height: 10rem; border-radius: .25rem; background: #4fb572; }
.submenu { background: #929292; margin-left: -.1rem; padding-left: .1rem; }
.submenu .item + .item { box-shadow: 0 -.05rem 0 #9a9a9a; }

/* task list */
.main { display: flex; flex-direction: column; padding-left: 3rem; }
.title { height: 11.8rem; padding: 3rem 0 0 1.5rem; font-size: 4rem; }
.panel { width: 118.5rem; height: 100rem; border-radius: 2rem; background: #b2b2b2; padding: 0 2.2rem 0 2.36rem; }
.panel-head { display: flex; height: 18.3rem; padding-top: 2.7rem; align-items: flex-start; }
.panel-head h2 { font-size: 4rem; margin-top: -.5rem; margin-right: auto; }
.select { display: flex; align-items: center; justify-content: space-between; width: 31.1rem; height: 4rem; border-radius: 2rem; padding: 0 2.24rem 0 3.4rem; background: #999; color: #5a5858; fill: #5a5858; }
.select span { position: relative; top: -.08rem; }
.select.narrow { width: 24.05rem; padding-left: 4rem; margin-right: 1.65rem; }
.select.pale { background: #bdbdbd; color: #625e5e; fill: #625e5e; }
.button { display: flex; align-items: center; justify-content: space-between; width: 15.3rem; height: 4rem; border-radius: 2rem; padding: 0 2.3rem; background: #bdbdbd; color: #050505; }
.button.light { background: #cbcbcb; }
.table { border: .1rem solid #050505; background: #cbcbcb; padding-top: 52.9rem; height: 82rem; }
.row { display: grid; grid-template-columns: 15.8rem 27.1rem 25.46rem 21.6rem auto; align-items: start; height: 8.87rem; padding: 3.6rem 0 0 3.55rem; border-bottom: .1rem solid #050505; white-space: nowrap; }
.row.first { height: 8.95rem; }
.row:last-child { padding-top: 3.55rem; }
.row b { font-weight: 500; padding-top: .15rem; }
.bar { width: 16.3rem; height: .85rem; margin-top: .82rem; border-radius: .4rem; background: #a9a9a9; }
.bar i { display: block; width: 12.8rem; height: 100%; border-radius: .4rem; background: #50b572; }
.state { display: flex; align-items: center; }
.state i { width: 3rem; height: .85rem; margin-right: 2rem; border-radius: .4rem; background: #50b572; position: relative; top: .08rem; }

/* right column */
.aside { display: flex; flex-direction: column; margin-left: 3rem; width: 37.5rem; }
.card { border-radius: 2rem; background: #b2b2b2; }
.user { display: flex; align-items: center; height: 6.8rem; margin: 2rem 0 3rem; padding: 0 2.36rem 0 2.25rem; fill: #202020; }
.mail { width: 2.7rem; height: 2.1rem; margin-right: 2.45rem; }
.bell { width: 2.8rem; height: 3rem; margin-right: 3.3rem; }
.avatar { width: 4.6rem; height: 4.6rem; margin-right: 1.9rem; }
.who { margin-right: auto; white-space: nowrap; }
.name { font-size: 2.4rem; letter-spacing: .09rem; margin-top: .1rem; }
.role { font-size: 1.6rem; letter-spacing: .03rem; margin-top: -.03rem; }
.stats { height: 46.3rem; padding: 2.97rem 4rem 0 3.1rem; }
.stats h3 { font-size: 2.4rem; margin-left: -.13rem; height: 4.03rem; }
.select.wide { margin: 0 0 2.7rem .1rem; }
.stat { display: grid; grid-template-columns: 6.4rem 23.2rem; column-gap: .8rem; height: 5.1rem; }
.stat strong { font-size: 3.6rem; font-weight: 600; text-align: center; line-height: 1; margin-top: -.84rem; }
.stat p { font-size: 1.4rem; margin: .58rem 0 0 .5rem; }
.meter { height: 1.5rem; border-radius: .75rem; background: #979797; }
.meter i { display: block; height: 100%; border-radius: .75rem; background: #4fb572; }
.stats h3.activity { margin-top: 3.47rem; height: 4.03rem; }
.legend { display: flex; justify-content: space-between; font-size: 1.4rem; margin: 1.78rem .75rem 0 0; line-height: 1.9rem; }
.key { display: flex; white-space: nowrap; }
.key b { display: block; font-weight: 500; }
.key i { width: 3rem; height: .4rem; margin: .76rem 1.06rem 0 0; border-radius: .15rem; background: #4fb572; }
.key.off i { background: #9f9f9f; }
.blank { margin-top: 3rem; height: 50rem; flex: none; }

/* dialog laid over the page */
.modal { position: absolute; left: 32.4rem; top: 16.3rem; width: 113.9rem; height: 72rem; border-radius: 2rem; background: #f6f6f6; box-shadow: 0 .1rem 1.2rem rgba(0, 0, 0, .5); color: #000; }
.modal-head { display: flex; justify-content: space-between; align-items: flex-start; height: 15.2rem; padding: 3.2rem 3.84rem 0 3.6rem; }
.modal-head h2 { font-size: 4rem; margin-top: .28rem; }
.kind { font-size: 3.2rem; font-weight: 600; color: #00d948; margin-top: -.04rem; }
.close { width: 3.2rem; height: 3.2rem; }
.modal-body { display: flex; height: 48.5rem; padding-left: 6rem; }
.map { width: 49.2rem; height: 36rem; margin-right: 8.7rem; }
.form { padding-top: 1rem; }
.field { display: flex; align-items: center; height: 4rem; margin-bottom: 3rem; }
.bad { width: 1.82rem; height: 1.82rem; margin: 0 1rem 0 2.08rem; position: relative; top: .08rem; }
.field em { font-style: normal; font-size: 1.4rem; color: #bb5151; position: relative; top: .1rem; }
.field.mid .bad { top: -.01rem; }
.field.mid em { top: .02rem; }
.field.last .bad { top: .22rem; }
.field.last em { top: .22rem; }
.message { width: 31.1rem; height: 12.9rem; border-radius: 2rem; background: #bdbdbd; color: #625e5e; padding: 1.82rem 3.4rem; }
.modal-foot { display: flex; justify-content: flex-end; padding-right: 4.22rem; }

/* map drawing */
.map path, .map ellipse { vector-effect: non-scaling-stroke; }
.homes { fill: none; stroke: #c6c6c6; stroke-width: 6.500px; stroke-dasharray: 7px 4px; }
.homes.units { stroke-width: 5px; stroke-dasharray: 4px .5px; }
.homes.sheds { stroke-width: 3.500px; stroke-dasharray: 3.500px 11px; }
.parcels { fill: none; stroke: #cfbfc0; stroke-width: 1px; }
.parcels .dashed { stroke-dasharray: 3px 2px; }
.roads { fill: none; stroke: #999; stroke-width: 2.300px; stroke-linejoin: round; }
.roads .highway { stroke: #fdd7a1; stroke-width: 5.800px; }
.labels { fill: #000; font-family: Inter, "Noto Sans", sans-serif; font-size: 24px; }
.labels .credit { font-size: 33px; }
```
